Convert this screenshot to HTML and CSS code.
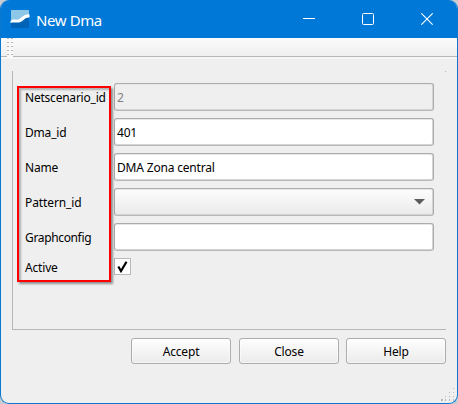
FILE: index.html
```html
<!DOCTYPE html>
<html lang="en">
<head>
<meta charset="utf-8">
<title>New Dma</title>
<link rel="stylesheet" href="styles.css">
</head>
<body>
<div class="window">
  <header class="titlebar">
    <svg class="logo" width="20" height="20" viewBox="0 0 20 20">
      <rect x="1" y="1" width="18" height="18" rx="1" fill="#0063b8"/>
      <path d="M1 1H19V6C14 5 12 11 8 11C5 12 3 10 1 12Z" fill="#8cc7e8"/>
      <path d="M0.5 12C4 9 6 12 9 10.200C12 8.500 13 5.500 19.500 5.300V8.500C15 8 14 11.500 10.500 13C7 14.500 4 12.500 0.500 14Z" fill="#fff"/>
    </svg>
    <h1 class="title">New Dma</h1>
    <div class="controls">
      <svg width="12" height="12"><path d="M0 5.500H12" stroke="#fff"/></svg>
      <svg width="12" height="12"><rect x=".5" y=".5" width="11" height="11" rx="1" fill="none" stroke="#fff"/></svg>
      <svg width="12" height="12"><path d="M.3.3L11.700 11.700M11.700.3L.3 11.700" stroke="#fff" stroke-width="1.100"/></svg>
    </div>
  </header>
  <div class="toolbar"><span class="handle"></span></div>
  <main class="content">
    <form class="frame">
      <label class="row"><span class="label netscenario">Netscenario_id</span><span class="field disabled">2</span></label>
      <label class="row"><span class="label">Dma_id</span><span class="field">401</span></label>
      <label class="row"><span class="label">Name</span><span class="field">DMA Zona central</span></label>
      <label class="row"><span class="label pattern">Pattern_id</span><span class="field select"><svg width="11" height="6"><path d="M0 0H11L5.500 5.500Z" fill="#5c5c5c"/></svg></span></label>
      <label class="row"><span class="label graph">Graphconfig</span><span class="field"></span></label>
      <label class="row check"><span class="label active">Active</span><span class="checkbox"><svg width="15" height="15"><path d="M3.300 7.500L6 12L11.500 2.800" fill="none" stroke="#000" stroke-width="2.200"/></svg></span></label>
      <div class="highlight"></div>
    </form>
    <footer class="buttons">
      <button class="accept" type="button">Accept</button>
      <button type="button">Close</button>
      <button type="button">Help</button>
    </footer>
  </main>
  <svg class="grip" width="14" height="14" fill="#b8b8b8"><path d="M12 0h1v1h-1zM8 4h1v1h-1zM12 4h1v1h-1zM4 8h1v1h-1zM8 8h1v1h-1zM12 8h1v1h-1zM0 11h2v2h-2zM4 11h1v2h-1zM8 11h1v2h-1zM12 11h1v2h-1z"/></svg>
</div>
</body>
</html>
```
FILE: styles.css
```css
* { box-sizing: border-box; }
body {
  margin: 0;
  background: #c9cdd1;
  font: 12px/16px "Noto Sans", sans-serif;
  letter-spacing: -.18px;
  color: #000;
  overflow: hidden;
}
.window {
  position: relative;
  width: 458px;
  height: 404px;
  border: 1px solid #0878d0;
  border-top: 0;
  border-radius: 9px;
  background: #efefef;
  overflow: hidden;
}
.titlebar {
  display: flex;
  align-items: center;
  height: 38px;
  padding: 0 24px 0 9px;
  background: #0078d7;
}
.title {
  margin: 1px 0 0 6px;
  font: 400 15px/20px "Noto Sans", sans-serif;
  letter-spacing: -.4px;
  color: #fff;
}
.controls { display: flex; gap: 47px; margin-left: auto; }
.toolbar {
  height: 21px;
  padding: 0 6px;
  background: linear-gradient(#fbfbfb 0, #efefef 18px, #b6b6b6 18px, #b6b6b6 19px, #f6f6f6 19px);
}
.handle {
  display: block;
  width: 6px;
  height: 20px;
  background:
    repeating-linear-gradient(transparent 0 1px, #f8f8f8 1px 4px),
    repeating-linear-gradient(90deg, #b5b5b5 0 2px, #f8f8f8 2px 4px);
}
.content { padding: 12px 11px 0; }
.frame {
  position: relative;
  width: 434px;
  height: 259px;
  padding: 12px 11px 0 12px;
  border-left: 1px solid #b6b6b6;
  border-bottom: 1px solid #b6b6b6;
}
.frame::after {
  content: "";
  position: absolute;
  top: 0;
  right: 0;
  width: 1px;
  height: 1px;
  background: #b6b6b6;
}
.row {
  display: flex;
  align-items: center;
  height: 28px;
  margin-bottom: 7px;
}
.label { width: 89px; padding-top: 1px; white-space: nowrap; }
.netscenario { letter-spacing: -.22px; }
.pattern { letter-spacing: -.1px; }
.graph { letter-spacing: -.35px; }
.active { padding-top: 2px; }
.field {
  display: flex;
  align-items: center;
  width: 320px;
  height: 28px;
  padding: 2px 2px 0;
  border: 1px solid #acacac;
  border-bottom-color: #b8b8b8;
  border-radius: 3px;
  background: #fff;
  box-shadow: inset 0 1px #e7e7e7, inset 0 -1px #d4d4d4, inset -1px 0 #d4d4d4;
}
.disabled { background: #efefef; color: #828282; }
.select {
  justify-content: flex-end;
  padding: 0 8px;
  background: linear-gradient(#fdfdfd, #eaeaea);
}
.check { height: 17px; }
.checkbox {
  width: 17px;
  height: 17px;
  border: 1px solid #b9b9b9;
  background: #fff;
}
.checkbox svg { display: block; }
.highlight {
  position: absolute;
  left: 4px;
  top: 15px;
  width: 94px;
  height: 196px;
  border: 2px solid #f00;
  box-shadow: 2px 2px 2px #0006, inset 2px 2px 2px #0004;
}
.buttons { display: flex; gap: 7px; justify-content: flex-end; padding-top: 8px; }
button {
  width: 100px;
  height: 26px;
  padding: 1px 0 0;
  border: 1px solid #acacac;
  border-radius: 3px;
  background: linear-gradient(#fefefe, #ebebeb);
  box-shadow: inset 0 0 0 1px #fff8;
  font: inherit;
  letter-spacing: inherit;
  color: inherit;
}
.accept { margin-right: 1px; }
.grip { position: absolute; right: 2px; bottom: 1px; }
```
